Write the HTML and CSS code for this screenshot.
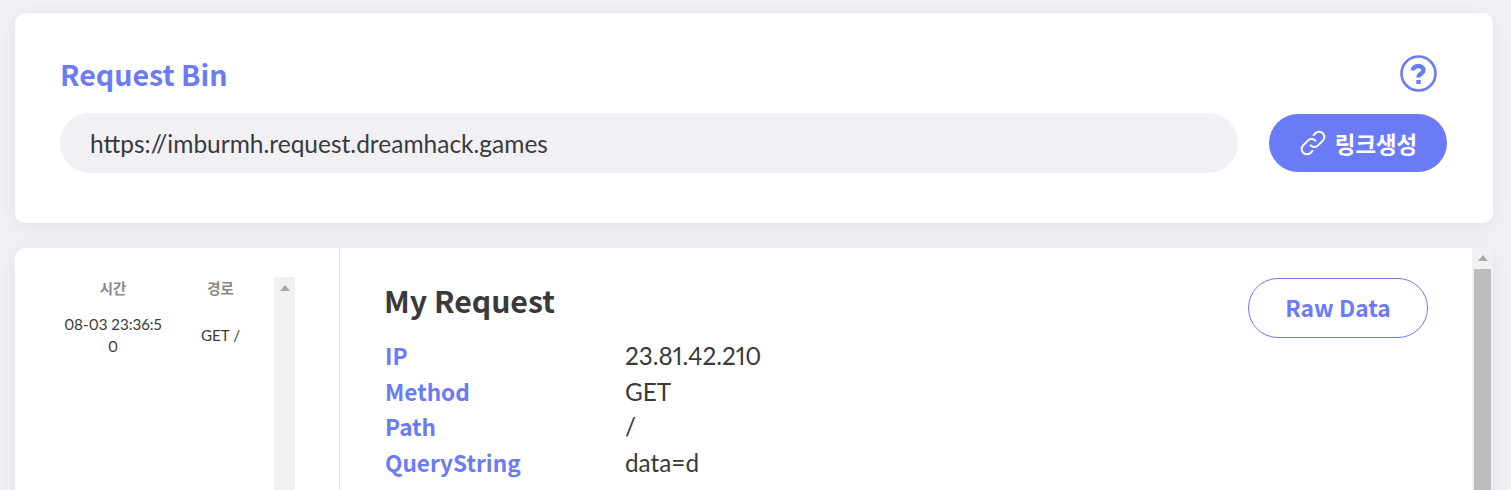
FILE: index.html
```html
<!DOCTYPE html>
<html>
<head>
	<title>Request Bin</title>
	<link rel="stylesheet" href="styles.css">
</head>
<body>
	<div class="card top-card">
		<div class="top-head">
			<h2 class="bin-title">Request Bin</h2>
			<svg class="help-icon" width="37" height="37" viewBox="0 0 37 37">
				<circle cx="18.5" cy="18.5" r="17" fill="none" stroke="#6b7bf7" stroke-width="2.6"/>
				<path d="M13 15.500c0-2.800 2.200-4.500 5.300-4.500 3 0 5.200 1.600 5.200 4.200 0 3.600-5 3.300-5 7.300" fill="none" stroke="#6b7bf7" stroke-width="4.400"/>
				<rect x="16.300" y="25" width="4.400" height="4" fill="#6b7bf7"/>
			</svg>
		</div>
		<div class="url-row">
			<div class="url-box">https://imburmh.request.dreamhack.games</div>
			<button class="link-btn">
				<svg width="28" height="28" viewBox="0 0 24 24" fill="none" stroke="#fff" stroke-width="1.700" stroke-linecap="round">
					<path d="M10 14a4.500 4.500 0 0 0 6.400 0l4-4a4.500 4.500 0 0 0-6.400-6.400l-1.500 1.500"/>
					<path d="M14 10a4.500 4.500 0 0 0-6.400 0l-4 4a4.500 4.500 0 0 0 6.400 6.400l1.500-1.500"/>
				</svg>
				<span>링크생성</span>
			</button>
		</div>
	</div>

	<div class="card bottom-card">
		<div class="side">
			<div class="side-list">
				<div class="req-row req-head">
					<div class="col-time">시간</div>
					<div class="col-path">경로</div>
				</div>
				<div class="req-row req-item">
					<div class="col-time">08-03 23:36:50</div>
					<div class="col-path">GET /</div>
				</div>
			</div>
			<div class="side-scroll"><span class="arrow"></span></div>
		</div>
		<div class="main">
			<div class="main-head">
				<h3 class="main-title">My Request</h3>
				<button class="raw-btn">Raw Data</button>
			</div>
			<div class="info-row"><div class="info-key">IP</div><div>23.81.42.210</div></div>
			<div class="info-row"><div class="info-key">Method</div><div>GET</div></div>
			<div class="info-row"><div class="info-key">Path</div><div>/</div></div>
			<div class="info-row"><div class="info-key">QueryString</div><div>data=d</div></div>
		</div>
		<div class="main-scroll">
			<span class="arrow"></span>
			<div class="thumb"></div>
		</div>
	</div>
</body>
</html>
```

FILE: styles.css
```css
html, body {
	height: 490px;
	overflow: hidden;
}
body {
	margin: 0;
	padding: 13px 18px 0 15px;
	box-sizing: border-box;
	background-color: #f0f0f5;
	font-family: Lato, "Noto Sans CJK KR", sans-serif;
	font-variant-numeric: proportional-nums;
	color: #3a3a3a;
}
.card {
	background-color: white;
	border-radius: 10px;
	box-shadow: 0 4px 20px rgba(60, 60, 90, 0.08);
}
.top-card {
	height: 210px;
	padding: 40px 46px 0 45px;
	box-sizing: border-box;
}
.top-head {
	display: flex;
	justify-content: space-between;
	align-items: center;
	height: 42px;
	padding-right: 10px;
}
.bin-title {
	margin: 0;
	font-family: "Noto Sans CJK KR", sans-serif;
	font-size: 28.6px;
	line-height: 40px;
	font-weight: 700;
	color: #6b7bf7;
}
.help-icon {
	margin-top: -2px;
}
.url-row {
	display: flex;
	align-items: center;
	justify-content: space-between;
	margin-top: 18px;
}
.url-box {
	width: 1178px;
	height: 60px;
	line-height: 62px;
	padding-left: 30px;
	box-sizing: border-box;
	border-radius: 30px;
	background-color: #f0f0f5;
	font-size: 24.5px;
}
.link-btn {
	display: flex;
	align-items: center;
	justify-content: center;
	gap: 8px;
	width: 178px;
	height: 58px;
	padding: 0;
	border: none;
	border-radius: 29px;
	background-color: #6b7bf7;
	color: white;
	font-family: "Noto Sans CJK KR", sans-serif;
	font-size: 22.4px;
	font-weight: 700;
}
.bottom-card {
	display: flex;
	height: 300px;
	margin-top: 25px;
	border-radius: 10px 0 0 0;
}
.side {
	display: flex;
	width: 325px;
	padding-top: 29px;
	box-sizing: border-box;
	border-right: 1px solid #ddd;
}
.side-list {
	width: 259px;
	padding-left: 48px;
	box-sizing: border-box;
}
.req-row {
	display: flex;
	align-items: center;
	text-align: center;
}
.col-time {
	width: 100px;
	word-break: break-all;
}
.col-path {
	width: 107px;
	margin-left: 4px;
}
.req-head {
	margin-top: -1px;
	font-family: "Noto Sans CJK KR", sans-serif;
	font-size: 14.4px;
	line-height: 24px;
	font-weight: 700;
	color: #888;
}
.req-item {
	margin-top: 13px;
	font-size: 15.2px;
	line-height: 22px;
}
.side-scroll {
	width: 21px;
	height: 100%;
	background-color: #f1f1f1;
	display: flex;
	justify-content: center;
	padding-top: 8px;
	box-sizing: border-box;
}
.arrow {
	width: 0;
	height: 0;
	border-left: 5px solid transparent;
	border-right: 5px solid transparent;
	border-bottom: 6px solid #a8a8a8;
}
.main {
	flex: 1;
	padding: 30px 44px 0 45px;
}
.main-head {
	display: flex;
	justify-content: space-between;
	height: 60px;
}
.main-title {
	margin: -3px 0 0 -1px;
	font-family: "Noto Sans CJK KR", sans-serif;
	font-size: 30.2px;
	line-height: 50px;
	font-weight: 700;
}
.raw-btn {
	width: 180px;
	height: 60px;
	padding-bottom: 2px;
	border: 1px solid #6b7bf7;
	border-radius: 30px;
	background-color: white;
	color: #6b7bf7;
	font-family: "Noto Sans CJK KR", sans-serif;
	font-size: 22.8px;
	font-weight: 700;
}
.info-row {
	display: flex;
	font-size: 24.3px;
	line-height: 35.5px;
}
.info-key {
	width: 240px;
	box-sizing: border-box;
	font-family: "Noto Sans CJK KR", sans-serif;
	font-size: 22.6px;
	font-weight: 700;
	color: #6b7bf7;
}
.main-scroll {
	width: 21px;
	background-color: #f1f1f1;
	display: flex;
	flex-direction: column;
	align-items: center;
	padding-top: 7px;
	box-sizing: border-box;
}
.thumb {
	width: 17px;
	flex: 1;
	margin-top: 8px;
	background-color: #bcbcbc;
}
```
